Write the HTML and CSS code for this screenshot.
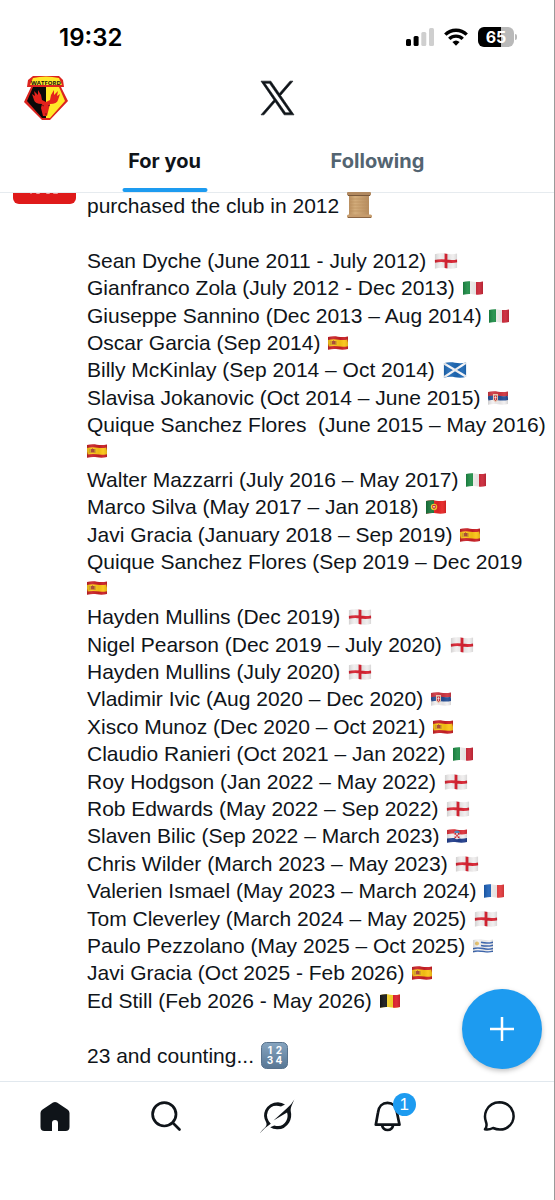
FILE: index.html
```html
<!DOCTYPE html>
<html lang="en">
<head>
<meta charset="utf-8">
<meta name="viewport" content="width=device-width, initial-scale=1">
<title>Home / X</title>
<link rel="stylesheet" href="styles.css">
</head>
<body>
<svg class="sprite" aria-hidden="true">
  <defs>
    <clipPath id="wave"><path d="M0 1C4 .1 7 .2 10 .7S16 1.300 20 .5V13C16 14 13 13.800 10 13.300S4 12.800 0 13.700Z"/></clipPath>
    <linearGradient id="sheen" x1="0" x2="1" y1="0" y2="0">
      <stop offset="0" stop-color="#000" stop-opacity=".14"/><stop offset=".25" stop-color="#fff" stop-opacity=".08"/>
      <stop offset=".6" stop-color="#000" stop-opacity=".06"/><stop offset=".8" stop-color="#fff" stop-opacity=".06"/><stop offset="1" stop-color="#000" stop-opacity=".12"/>
    </linearGradient>
    <linearGradient id="key" x1="0" x2="0" y1="0" y2="1"><stop offset="0" stop-color="#87a5c0"/><stop offset="1" stop-color="#577694"/></linearGradient>
    <linearGradient id="paper" x1="0" x2="1" y1="0" y2="0"><stop offset="0" stop-color="#b98f60"/><stop offset=".3" stop-color="#d3ad7c"/><stop offset="1" stop-color="#b68c5f"/></linearGradient>
  </defs>
  <symbol id="england" viewBox="0 0 20 14"><g clip-path="url(#wave)"><path fill="#f0eeee" d="M0 0h20v14H0z"/><path fill="none" stroke="#d8202f" stroke-width="2.500" d="M0 7.400C4 6.400 7 6.500 10 7s6 .8 10-.2M10 0v14"/><path fill="url(#sheen)" d="M0 0h20v14H0z"/></g></symbol>
  <symbol id="italy" viewBox="0 0 20 14"><g clip-path="url(#wave)"><path fill="#f3f0ef" d="M0 0h20v14H0z"/><path fill="#1c8c45" d="M0 0h7v14H0z"/><path fill="#cb2738" d="M13 0h7v14h-7z"/><path fill="url(#sheen)" d="M0 0h20v14H0z"/></g></symbol>
  <symbol id="france" viewBox="0 0 20 14"><g clip-path="url(#wave)"><path fill="#f3f0ef" d="M0 0h20v14H0z"/><path fill="#1b60b8" d="M0 0h7v14H0z"/><path fill="#e43a3d" d="M13 0h7v14h-7z"/><path fill="url(#sheen)" d="M0 0h20v14H0z"/></g></symbol>
  <symbol id="belgium" viewBox="0 0 20 14"><g clip-path="url(#wave)"><path fill="#fbd72c" d="M0 0h20v14H0z"/><path fill="#151515" d="M0 0h7v14H0z"/><path fill="#dd1f2d" d="M13 0h7v14h-7z"/><path fill="url(#sheen)" d="M0 0h20v14H0z"/></g></symbol>
  <symbol id="spain" viewBox="0 0 20 14"><g clip-path="url(#wave)"><path fill="#c91f25" d="M0 0h20v14H0z"/><path fill="none" stroke="#fbc514" stroke-width="6.600" d="M0 7.400C4 6.400 7 6.500 10 7s6 .8 10-.2"/><path fill="#a5402a" d="M4 5h1l.5-1.300L6 5h1.500v3.500H4z"/><path stroke="#9b6a35" stroke-width=".7" d="M3 5v4M8 5v4"/><path fill="url(#sheen)" d="M0 0h20v14H0z"/></g></symbol>
  <symbol id="portugal" viewBox="0 0 20 14"><g clip-path="url(#wave)"><path fill="#e62424" d="M0 0h20v14H0z"/><path fill="#16753a" d="M0 0h8v14H0z"/><circle cx="8" cy="7" r="3.200" fill="#efcb2a"/><path fill="#d62424" d="M6.300 5h3.400v2.500L8 9.200 6.300 7.500z"/><path fill="#fff" d="M7.300 6h1.400v1.600H7.300z"/><path fill="url(#sheen)" d="M0 0h20v14H0z"/></g></symbol>
  <symbol id="serbia" viewBox="0 0 20 14"><g clip-path="url(#wave)"><path fill="#f1eff0" d="M0 0h20v14H0z"/><path fill="#cf3540" d="M0 0h20v5.500H0z"/><path fill="none" stroke="#244e96" stroke-width="4.400" d="M0 7.400C4 6.400 7 6.500 10 7s6 .8 10-.2"/><path fill="#e9c8ae" d="M5 3h5v6L7.500 11.500 5 9z"/><path fill="#cb303a" d="M6 4.500h3v4L7.500 10 6 8.500z"/><path stroke="#fff" stroke-width=".6" d="M7.500 5v4M6.300 6.500h2.400"/><path fill="url(#sheen)" d="M0 0h20v14H0z"/></g></symbol>
  <symbol id="croatia" viewBox="0 0 20 14"><g clip-path="url(#wave)"><path fill="#f1eff0" d="M0 0h20v14H0z"/><path fill="#dc3039" d="M0 0h20v4.800C16 5.800 13 5.500 10 5S4 4.400 0 5.300z"/><path fill="#203d8c" d="M0 9.600C4 8.700 7 8.900 10 9.300s6 .6 10-.2V14H0z"/><path fill="#f6eded" d="M7.500 3.500h5v5.200q-2.500 3-5 0z"/><path fill="#d5232f" d="M7.500 4h1.700v1.700H7.500zM10.800 4h1.700v1.700h-1.700zM9.200 5.700h1.600v1.700H9.200zM7.500 7.400h1.700v1.700H7.500zM10.800 7.400h1.700v1.700h-1.700z"/><path fill="#5089be" d="M7.500 2.300l2.500-.7 2.500.7V4h-5z"/><path fill="url(#sheen)" d="M0 0h20v14H0z"/></g></symbol>
  <symbol id="scotland" viewBox="0 0 20 14"><g clip-path="url(#wave)"><path fill="#1d68b5" d="M0 0h20v14H0z"/><path stroke="#f8f8fa" stroke-width="2" d="M0 1l20 12M0 13.500L20 .5"/><path fill="url(#sheen)" d="M0 0h20v14H0z"/></g></symbol>
  <symbol id="uruguay" viewBox="0 0 20 14"><g clip-path="url(#wave)"><path fill="#f2f2f3" d="M0 0h20v14H0z"/><path fill="none" stroke="#3c67b2" stroke-width="1.500" d="M8 3.300c4 .9 8 1 12-.2M8 6.400c4 .9 8 1 12-.2M0 9.800q4-1.500 10-.2t10-.2M0 12.700q4-1.500 10-.2t10-.2"/><circle cx="4" cy="4.500" r="2" fill="#e3bd65"/><path fill="url(#sheen)" d="M0 0h20v14H0z"/></g></symbol>
</svg>

<div class="app">
  <div class="status">
    <time class="clock">19:32</time>
    <div class="indicators">
      <svg class="signal" viewBox="0 0 28 18" aria-label="Signal"><rect y="11" width="5" height="7" rx="1.500"/><rect x="7.600" y="8" width="5" height="10" rx="1.500"/><g fill="#cfcfcf"><rect x="15.300" y="4" width="5" height="14" rx="1.500"/><rect x="23" width="5" height="18" rx="1.500"/></g></svg>
      <svg class="wifi" viewBox="0 0 24 18" aria-label="Wi-Fi"><path fill="none" stroke="#000" stroke-width="3.400" d="M1.300 6.600a15.200 15.200 0 0 1 21.400 0M5.300 10.900a9.500 9.500 0 0 1 13.400 0"/><path d="M12 17.800l-3.600-3.700q3.600-3 7.200 0z"/></svg>
      <div class="battery"><span>65</span></div>
    </div>
  </div>

  <header class="topbar">
    <a class="profile" href="#profile" aria-label="Profile">
      <svg viewBox="0 0 44 44"><path fill="#dc241f" d="M9 0h26l4 4 1 7h-3l7 14-18 19h-8L0 26 7 11H3l1-7z"/><path fill="#ffe928" d="M9 2Q22-1 35 2l3 7H6zM22 11h13l6 14-15 17h-4z"/><path fill="#090909" d="M22 11H9L3 25l15 17h4z"/><path fill="#e3231c" d="M18 28q-7 0-8-4l-2-6 3 2-1-5 4 4v-5l3 5 1 5 4 2 4-2 1-5 3-5v5l4-4-1 5 3-2-2 6q-1 4-8 4l-1 4-2 8h-4l-2-8z"/><path d="M18 29l2 1M26 29l-2 1M21 38h2" stroke="#7b1114"/><text x="22" y="9" text-anchor="middle" class="crest-text">WATFORD</text></svg>
    </a>
    <a class="brand" href="#home" aria-label="X"><svg viewBox="0 0 1200 1227"><path fill="#0f1419" stroke="#0f1419" stroke-width="22" d="M714.163 519.284L1160.890 0H1055.030L667.137 450.887L357.328 0H0L468.492 681.821L0 1226.370H105.866L515.491 750.218L842.672 1226.370H1200L714.137 519.284ZM569.165 687.828L521.697 619.934L144.011 79.694H306.615L611.412 515.685L658.880 583.579L1055.080 1150.300H892.476L569.165 687.854Z"/></svg></a>
  </header>

  <nav class="tabs" aria-label="Timeline">
    <a class="tab active" href="#foryou">For you</a>
    <a class="tab" href="#following">Following</a>
  </nav>

  <main class="feed">
    <article class="post">
      <div class="author" aria-hidden="true"><svg viewBox="0 0 63 11"><path fill="none" stroke="#f9b9b7" d="M18 0v1M23 0q2 1 4 0M33 0q2 1 4 0M40 0q3 1 5 0"/></svg></div>
      <div class="copy">
        <p class="row">purchased the club in 2012 <svg class="emoji" viewBox="0 0 27 27" aria-label="scroll"><path fill="url(#paper)" d="M3 2h20v21H3z"/><path stroke="#b88d5c" stroke-width=".6" d="M4 7h19M4 10h19M4 13h19M4 16h19M4 19h19"/><rect x="1" y="0" width="24" height="3.500" rx="1" fill="#b18960"/><path stroke="#79583a" d="M2 3.500h22"/><rect x="1" y="22.500" width="25" height="3.500" rx="1.500" fill="#c69c6d"/><path stroke="#896443" d="M2 25.500h23"/></svg></p>
        <ul class="managers">
          <li>Sean Dyche (June 2011 - July 2012) <svg class="flag wide"><use href="#england"/></svg></li>
          <li>Gianfranco Zola (July 2012 - Dec 2013) <svg class="flag"><use href="#italy"/></svg></li>
          <li>Giuseppe Sannino (Dec 2013 – Aug 2014) <svg class="flag"><use href="#italy"/></svg></li>
          <li>Oscar Garcia (Sep 2014) <svg class="flag"><use href="#spain"/></svg></li>
          <li>Billy McKinlay (Sep 2014 – Oct 2014) <svg class="flag wide"><use href="#scotland"/></svg></li>
          <li>Slavisa Jokanovic (Oct 2014 – June 2015) <svg class="flag"><use href="#serbia"/></svg></li>
          <li class="double">Quique Sanchez Flores&nbsp; (June 2015 – May 2016) <br><svg class="flag"><use href="#spain"/></svg></li>
          <li>Walter Mazzarri (July 2016 – May 2017) <svg class="flag"><use href="#italy"/></svg></li>
          <li>Marco Silva (May 2017 – Jan 2018) <svg class="flag"><use href="#portugal"/></svg></li>
          <li>Javi Gracia (January 2018 – Sep 2019) <svg class="flag"><use href="#spain"/></svg></li>
          <li class="double">Quique Sanchez Flores (Sep 2019 – Dec 2019 <br><svg class="flag"><use href="#spain"/></svg></li>
          <li>Hayden Mullins (Dec 2019) <svg class="flag wide"><use href="#england"/></svg></li>
          <li>Nigel Pearson (Dec 2019 – July 2020) <svg class="flag wide"><use href="#england"/></svg></li>
          <li>Hayden Mullins (July 2020) <svg class="flag wide"><use href="#england"/></svg></li>
          <li>Vladimir Ivic (Aug 2020 – Dec 2020) <svg class="flag"><use href="#serbia"/></svg></li>
          <li>Xisco Munoz (Dec 2020 – Oct 2021) <svg class="flag"><use href="#spain"/></svg></li>
          <li>Claudio Ranieri (Oct 2021 – Jan 2022) <svg class="flag"><use href="#italy"/></svg></li>
          <li>Roy Hodgson (Jan 2022 – May 2022) <svg class="flag wide"><use href="#england"/></svg></li>
          <li>Rob Edwards (May 2022 – Sep 2022) <svg class="flag wide"><use href="#england"/></svg></li>
          <li>Slaven Bilic (Sep 2022 – March 2023) <svg class="flag"><use href="#croatia"/></svg></li>
          <li>Chris Wilder (March 2023 – May 2023) <svg class="flag wide"><use href="#england"/></svg></li>
          <li>Valerien Ismael (May 2023 – March 2024) <svg class="flag"><use href="#france"/></svg></li>
          <li>Tom Cleverley (March 2024 – May 2025) <svg class="flag wide"><use href="#england"/></svg></li>
          <li>Paulo Pezzolano (May 2025 – Oct 2025) <svg class="flag"><use href="#uruguay"/></svg></li>
          <li>Javi Gracia (Oct 2025 - Feb 2026) <svg class="flag"><use href="#spain"/></svg></li>
          <li>Ed Still (Feb 2026 - May 2026) <svg class="flag"><use href="#belgium"/></svg></li>
        </ul>
        <p class="row">23 and counting... <svg class="emoji" viewBox="0 0 27 27" aria-label="numbers"><rect x=".5" y=".5" width="26" height="26" rx="5" fill="url(#key)" stroke="#58728c"/><g class="key-text"><text x="9" y="12">1</text><text x="18" y="12">2</text><text x="9" y="22">3</text><text x="18" y="22">4</text></g></svg></p>
      </div>
    </article>
    <button class="compose" type="button" aria-label="Post"><svg viewBox="0 0 24 24"><path stroke="#fff" stroke-width="2.500" d="M12 0v24M0 12h24"/></svg></button>
  </main>

  <nav class="dock" aria-label="Main">
    <a href="#home" aria-label="Home"><svg viewBox="0 0 36 36"><path fill="#0f1419" d="M16 4.600q2-1.400 4 0l10.500 6.800q2 1.300 2 3.600v14q0 4-4 4H21v-8q0-3-3-3t-3 3v8H7.500q-4 0-4-4V15q0-2.300 2-3.600z"/></svg></a>
    <a href="#search" aria-label="Search"><svg viewBox="0 0 36 36"><g fill="none" stroke="#0f1419" stroke-width="2.700"><circle cx="16.300" cy="16.300" r="11.700"/><path stroke-linecap="round" d="M25 25l6.500 6.500"/></g></svg></a>
    <a href="#grok" aria-label="Grok"><svg viewBox="0 0 36 36"><g fill="#0f1419"><path d="M14.500 22.500L28 10.300Q33 6 35.300 1.500q-2.500 5.500-3.300 8-.5 1.600-.3 3.500 1.500 6-1.500 11.500Q26 31.500 18 31.300q-4-.2-6.800-2l4-1.900q8 2.600 12-4.400 2.200-4 .9-8.500z"/><path d="M1 35q2-3 5-5.500Q8.500 27 7 24 3.500 18 6.300 12 10.500 4.500 19 4.300q4 .2 7 2.300l-4 1.800Q12 5.800 8.800 13.500q-2.500 6.500 3 12.300Q6 29.500 1 35z"/></g></svg></a>
    <a class="alerts" href="#notifications" aria-label="Notifications"><svg viewBox="0 0 36 36"><g fill="none" stroke="#0f1419" stroke-width="2.700" stroke-linejoin="round"><path d="M8 14.500C8.600 8.500 12.500 4.800 17.500 4.800S26.400 8.500 27 14.500L29.500 26.700H5.800z"/><path d="M12 27q1 5 5.600 5t5.600-5"/></g></svg><span class="badge">1</span></a>
    <a href="#messages" aria-label="Messages"><svg viewBox="0 0 36 36"><path fill="none" stroke="#0f1419" stroke-width="2.500" stroke-linejoin="round" d="M4 31.300Q6.500 28 5 24 2.800 18 5.300 12.500 9.500 4.300 18.500 4.300 26 4.500 30 10q4.500 7 1.300 14-4 7.600-12.300 7.600-3.500 0-7-1.600-4 2.200-8 1.300z"/></svg></a>
  </nav>
</div>
</body>
</html>
```
FILE: styles.css
```css
* { box-sizing: border-box; }
body { margin: 0; background: #fff; color: #0f1419; font-family: "Liberation Sans", sans-serif; }
a { color: inherit; text-decoration: none; }
svg { display: block; }
.sprite { position: absolute; width: 0; height: 0; }
.app { min-height: 100vh; display: flex; flex-direction: column; border-right: 1px solid #9a9a9a; }

.status { display: flex; justify-content: space-between; align-items: center; height: 56px; padding: 18px 40px 0 59px; color: #000; font-family: Inter, sans-serif; }
.clock { font-size: 24px; font-weight: 600; }
.indicators { display: flex; align-items: center; gap: 10px; }
.signal { width: 28px; height: 18px; }
.wifi { width: 24px; height: 18px; }
.battery { position: relative; display: flex; align-items: center; justify-content: center; width: 36px; height: 20px; border-radius: 6px; background: linear-gradient(90deg, #000 65%, #b9b9b9 65%); color: #fff; font-size: 16px; font-weight: 700; }
.battery::after { content: ""; position: absolute; right: -3px; top: 7px; width: 2px; height: 6px; border-radius: 0 2px 2px 0; background: #b9b9b9; }

.topbar { display: grid; grid-template-columns: 1fr auto 1fr; align-items: center; height: 84px; padding: 0 24px; }
.profile svg { width: 44px; height: 44px; }
.crest-text { font: 700 6px "Open Sans", sans-serif; fill: #111; }
.brand svg { width: 33px; height: 34px; overflow: visible; }

.tabs { display: grid; grid-template-columns: 1fr 1fr; height: 53px; padding: 0 70px 0 58px; border-bottom: 1px solid #e6ebef; font-family: Inter, sans-serif; font-size: 20px; font-weight: 700; line-height: 42px; }
.tab { position: relative; text-align: center; color: #536471; }
.tab.active { color: #0f1419; }
.tab.active::after { content: ""; position: absolute; left: 50%; bottom: 0; width: 85px; height: 4px; border-radius: 2px; background: #1d9bf0; transform: translateX(-50%); }

.feed { position: relative; flex: 1; display: flex; }
.post { flex: 1; display: grid; grid-template-columns: 63px 1fr; gap: 11px; padding: 0 0 11px 13px; }
.author { height: 11px; overflow: hidden; border-radius: 0 0 6px 6px; background: #df1a1a; }
.copy { display: grid; grid-template-rows: repeat(32, minmax(0, 1fr)); font-size: 21px; line-height: 26px; white-space: nowrap; }
.row { margin: 0; }
.row:last-child { grid-row: 32; }
.managers { grid-row: 3 / span 28; display: grid; grid-template-rows: repeat(28, minmax(0, 1fr)); margin: 0; padding: 0; list-style: none; }
.double { grid-row: span 2; }
.flag { display: inline-block; width: 20px; height: 14px; margin-left: 2px; vertical-align: 0; }
.flag.wide { width: 24px; height: 16px; vertical-align: -1px; }
.double .flag { margin-left: 0; }
.emoji { display: inline-block; width: 27px; height: 27px; margin: -4px 0 -4px 1px; vertical-align: -2px; }
.key-text { fill: #fff; font: 700 10px Inter, sans-serif; text-anchor: middle; }
.compose { position: absolute; right: 12px; bottom: 12px; display: grid; place-items: center; width: 80px; height: 80px; padding: 0; border: 0; border-radius: 50%; background: #1d9bf0; box-shadow: 0 2px 5px rgba(0, 0, 0, .25); }
.compose svg { width: 24px; height: 24px; }

.dock { display: grid; grid-template-columns: repeat(5, 1fr); height: 119px; padding-top: 16px; border-top: 1px solid #e1e8ee; }
.dock a { position: relative; justify-self: center; align-self: start; }
.dock svg { width: 36px; height: 36px; }
.badge { position: absolute; left: 23px; top: -5px; width: 23px; height: 23px; border-radius: 50%; background: #1d9bf0; color: #fff; font-size: 17px; line-height: 23px; text-align: center; }
```
